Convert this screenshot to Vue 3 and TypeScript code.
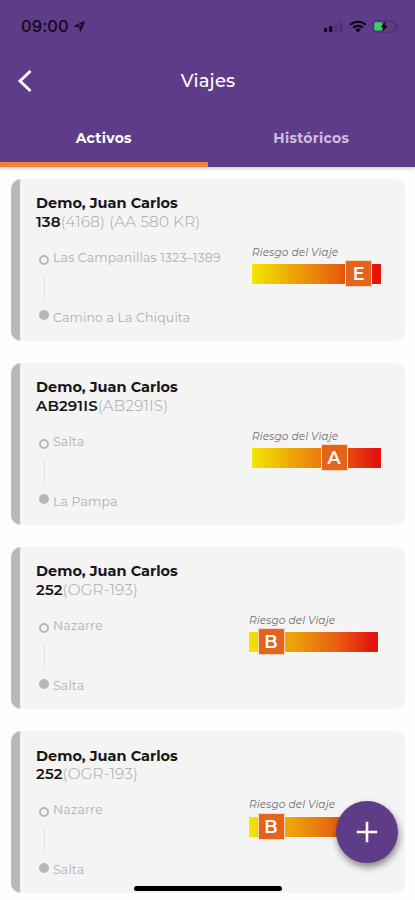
<script setup lang="ts">
interface Trip {
  driver: string
  unit: string
  plate: string
  from: string
  to: string
  risk: string
  position: number
  shifted: boolean
}

const trips: Trip[] = [
  { driver: 'Demo, Juan Carlos', unit: '138', plate: '(4168) (AA 580 KR)', from: 'Las Campanillas 1323–1389', to: 'Camino a La Chiquita', risk: 'E', position: 94, shifted: false },
  { driver: 'Demo, Juan Carlos', unit: 'AB291IS', plate: '(AB291IS)', from: 'Salta', to: 'La Pampa', risk: 'A', position: 69.5, shifted: false },
  { driver: 'Demo, Juan Carlos', unit: '252', plate: '(OGR-193)', from: 'Nazarre', to: 'Salta', risk: 'B', position: 9.5, shifted: true },
  { driver: 'Demo, Juan Carlos', unit: '252', plate: '(OGR-193)', from: 'Nazarre', to: 'Salta', risk: 'B', position: 9.5, shifted: true },
]
</script>

<template>
  <div class="screen">
    <header class="header">
      <div class="status">
        <div class="clock">
          <span class="time">09:00</span>
          <svg class="location" width="11" height="11" viewBox="0 0 12 12"><path d="M1 5.7 11 1 7.2 11 6.2 6.2Z" fill="none" stroke="#1b0d2d" stroke-width="1.5" stroke-linejoin="round" /><path d="M6 6 11 1 7.2 11Z" fill="#1b0d2d" /></svg>
        </div>
        <div class="indicators">
          <svg width="19" height="13" viewBox="0 0 19 13">
            <rect x="0" y="8" width="3.2" height="4" rx="1" fill="#0c0614" />
            <rect x="5" y="6" width="3.4" height="6" rx="1" fill="#0c0614" />
            <rect x="10.3" y="3.5" width="3.2" height="8.5" rx="1" fill="#51337a" />
            <rect x="15.4" y="1" width="3.2" height="11" rx="1" fill="#51337a" />
          </svg>
          <svg class="wifi" width="18" height="13" viewBox="0 0 18 13">
            <g fill="none" stroke="#0c0614" stroke-width="2.1"><path d="M1.2 4.8a11.4 11.4 0 0 1 15.6 0" /><path d="M4.1 7.8a7.2 7.2 0 0 1 9.8 0" /></g>
            <path d="M6.2 9.7a4.2 4.2 0 0 1 5.6 0L9 12.5Z" fill="#0c0614" />
          </svg>
          <svg class="battery" width="28" height="13" viewBox="0 0 28 13">
            <rect x=".8" y=".8" width="22.4" height="11.2" rx="3" fill="none" stroke="#4c2f6c" stroke-width="1.2" />
            <path d="M24.7 4.2c2.2.8 2.2 3.8 0 4.6Z" fill="#4c2f6c" />
            <rect x="2.3" y="2.2" width="8" height="8.4" rx="1.5" fill="#35d35f" />
            <path d="M13.2 2.2 9.2 7H11.6L10.8 11 15.4 5.9H12.8Z" fill="#0c0614" stroke="#0c0614" stroke-width=".4" />
          </svg>
        </div>
      </div>
      <div class="nav">
        <svg class="back" width="16" height="24" viewBox="0 0 16 24"><path d="M14.5 2 4 12 14.5 22" fill="none" stroke="#fff" stroke-width="2.9" /></svg>
        <h1 class="title">Viajes</h1>
        <span class="nav-space"></span>
      </div>
      <nav class="tabs">
        <div class="tab active"><span>Activos</span></div>
        <div class="tab"><span>Históricos</span></div>
      </nav>
    </header>

    <main class="list">
      <article v-for="(trip, i) in trips" :key="i" class="card">
        <div class="driver">{{ trip.driver }}</div>
        <div class="vehicle"><b>{{ trip.unit }}</b><span>{{ trip.plate }}</span></div>
        <div class="details">
          <div class="route">
            <div class="track"><i class="origin"></i><i class="line"></i><i class="target"></i></div>
            <div class="places"><span>{{ trip.from }}</span><span>{{ trip.to }}</span></div>
          </div>
          <div class="risk" :class="{ shifted: trip.shifted }">
            <div class="label">Riesgo del Viaje</div>
            <div class="bar"><div class="badge" :style="{ left: trip.position + 'px' }">{{ trip.risk }}</div></div>
          </div>
        </div>
      </article>
    </main>

    <button class="add" aria-label="Agregar">
      <svg width="22" height="22" viewBox="0 0 22 22"><path d="M11 .8V21.2M.8 11H21.2" stroke="#fff" stroke-width="2.6" /></svg>
    </button>
    <div class="home"></div>
  </div>
</template>

<style>
body { margin: 0; background: #fff; overflow: hidden; }
</style>

<style scoped>
.screen { position: relative; width: 415px; height: 900px; overflow: hidden; background: #fefefe; font-family: Montserrat, Inter, "Liberation Sans", sans-serif; }
.header { box-sizing: border-box; height: 167px; display: flex; flex-direction: column; background: #5f3c87; box-shadow: 0 1px 4px rgba(60, 80, 80, .35); }
.status { height: 52px; box-sizing: border-box; padding: 0 15px 0 21px; display: flex; align-items: center; justify-content: space-between; }
.clock { display: flex; align-items: center; gap: 5px; color: #120720; }
.time { font-family: Inter, "Liberation Sans", sans-serif; font-size: 16.5px; font-weight: 500; letter-spacing: .1px; }
.indicators { display: flex; align-items: center; gap: 6px; }
.battery { margin-left: -1px; }
.nav { height: 58px; padding: 0 16px; display: flex; align-items: center; justify-content: space-between; }
.title { margin: 0; padding-left: 1px; color: #fff; font-size: 18px; line-height: 24px; font-weight: 500; letter-spacing: .2px; }
.nav-space { width: 16px; }
.tabs { flex: 1; display: flex; }
.tab { flex: 1; display: flex; align-items: center; justify-content: center; color: #d0bde0; font-size: 14px; font-weight: 700; letter-spacing: .3px; border-bottom: 5px solid transparent; padding-top: 3px; }
.active { color: #fff; border-color: #ef8236; }
.list { padding: 11.6px 10px 0 11px; display: flex; flex-direction: column; gap: 22.2px; }
.card { box-sizing: border-box; height: 162px; flex: none; border-radius: 10px; background: linear-gradient(90deg, #b9b9b9 9px, #f4f4f4 9px); padding: 15.4px 24px 0 25px; }
.driver, .vehicle { height: 18.8px; line-height: 18.8px; white-space: nowrap; color: #161616; }
.driver { font-size: 14.5px; font-weight: 700; }
.vehicle { font-size: 15px; letter-spacing: .15px; }
.vehicle b { font-weight: 600; }
.vehicle span { color: #a6a6a6; font-weight: 300; font-size: 15.2px; letter-spacing: .22px; }
.details { display: flex; justify-content: space-between; }
.route { display: flex; gap: 4px; padding-top: 17.2px; }
.track { width: 10px; margin-left: 3px; padding-top: 6px; display: flex; flex-direction: column; align-items: center; }
.origin { box-sizing: border-box; width: 10px; height: 10px; border: 2px solid #b9b9b9; border-radius: 50%; }
.line { width: 1px; height: 25px; margin: 11px 0 9.4px; background: #e2e2e2; }
.target { width: 10px; height: 10px; border-radius: 50%; background: #b8b8b8; }
.places { display: flex; flex-direction: column; gap: 42px; color: #b0b0b0; font-size: 12.5px; line-height: 18px; letter-spacing: .17px; white-space: nowrap; }
.risk { width: 129px; padding-top: 12px; }
.shifted { margin-right: 3px; }
.label { height: 20.4px; line-height: 17px; font-size: 10.5px; font-style: italic; color: #6e6e6e; letter-spacing: .15px; white-space: nowrap; }
.bar { position: relative; height: 20px; background: linear-gradient(90deg, #f2e600 0%, #eda009 34%, #e66410 66%, #e51310 96%); box-shadow: 0 0 1px 1px #faf7ef; }
.badge { position: absolute; top: -3px; width: 25px; height: 25px; display: flex; align-items: center; justify-content: center; background: #e5641d; box-shadow: 0 0 0 1px #f8d7be; color: #fff; font-size: 17.5px; font-weight: 600; }
.add { position: absolute; left: 336px; top: 800.5px; width: 62px; height: 62px; padding: 0; border: 0; border-radius: 50%; display: flex; align-items: center; justify-content: center; background: #5f3c87; box-shadow: 1px 4px 7px rgba(0, 0, 0, .45); }
.home { position: absolute; left: 134px; top: 886px; width: 148px; height: 5px; border-radius: 3px; background: #000; }
</style>
